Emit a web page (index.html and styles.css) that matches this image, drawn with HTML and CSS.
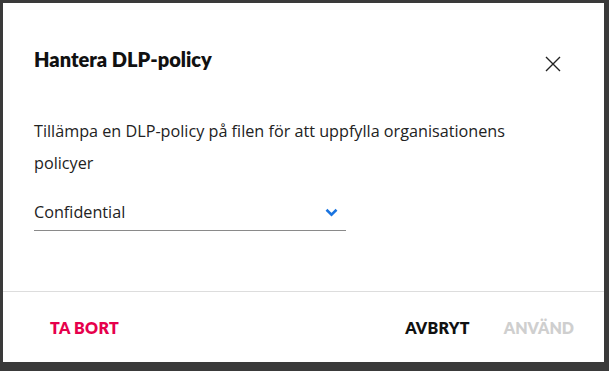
FILE: index.html
```html
<!DOCTYPE html>
<html lang="sv">
<head>
<meta charset="utf-8">
<link rel="stylesheet" href="styles.css">
</head>
<body>
<div class="dialog">
  <div class="header">
    <h1 class="title">Hantera DLP-policy</h1>
    <button class="close" aria-label="Stäng">
      <svg width="16" height="16" viewBox="0 0 16 16"><path d="M1 1L15 15M15 1L1 15" stroke="#222" stroke-width="1.4" fill="none"/></svg>
    </button>
  </div>
  <div class="content">
    <p class="desc">Tillämpa en DLP-policy på filen för att uppfylla organisationens policyer</p>
    <div class="select">
      <span class="value">Confidential</span>
      <svg class="chev" width="13" height="9" viewBox="0 0 13 9"><path d="M1.5 1.8L6.5 6.6L11.5 1.8" stroke="#1a74e0" stroke-width="2.6" fill="none"/></svg>
    </div>
  </div>
  <div class="footer">
    <button class="btn danger">TA BORT</button>
    <div class="right">
      <button class="btn">AVBRYT</button>
      <button class="btn disabled">ANVÄND</button>
    </div>
  </div>
</div>
</body>
</html>
```
FILE: styles.css
```css
html, body { margin: 0; padding: 0; }
body {
  background: #3a3a3a;
  width: 609px;
  height: 371px;
  overflow: hidden;
  font-family: Lato, "Noto Sans", sans-serif;
}
.dialog {
  margin: 3px 0 0 3px;
  width: 601px;
  height: 359px;
  background: #fff;
  display: flex;
  flex-direction: column;
}
.header {
  display: flex;
  justify-content: space-between;
  align-items: center;
  padding: 43px 43px 0 31px;
}
.title {
  margin: 0;
  font-size: 20px;
  font-weight: 800;
  color: #111;
  line-height: 24px;
}
.close {
  border: 0;
  background: none;
  padding: 0;
  margin-top: 10px;
  display: flex;
}
.content {
  padding: 0 31px;
  flex: 1;
}
.desc {
  margin: 43px 0 0;
  font-family: "Open Sans", sans-serif;
  font-size: 16.2px;
  line-height: 32px;
  color: #222;
  width: 530px;
}
.select {
  margin-top: 15px;
  width: 312px;
  height: 37px;
  border-bottom: 1px solid #8a8a8a;
  display: flex;
  align-items: center;
  justify-content: space-between;
  box-sizing: border-box;
  padding-right: 8px;
}
.value { font-family: "Open Sans", sans-serif; font-size: 16.2px; color: #222; }
.footer {
  border-top: 1px solid #ddd;
  height: 70px;
  display: flex;
  align-items: center;
  justify-content: space-between;
  padding: 0 30px 0 47px;
}
.right { display: flex; gap: 34px; }
.btn {
  border: 0;
  background: none;
  padding: 0;
  font-family: Lato, "Noto Sans", sans-serif;
  font-weight: 800;
  font-size: 16px;
  color: #111;
  letter-spacing: 0.3px;
}
.danger { color: #e6004c; }
.disabled { color: #cfcfcf; letter-spacing: 0; }
```
